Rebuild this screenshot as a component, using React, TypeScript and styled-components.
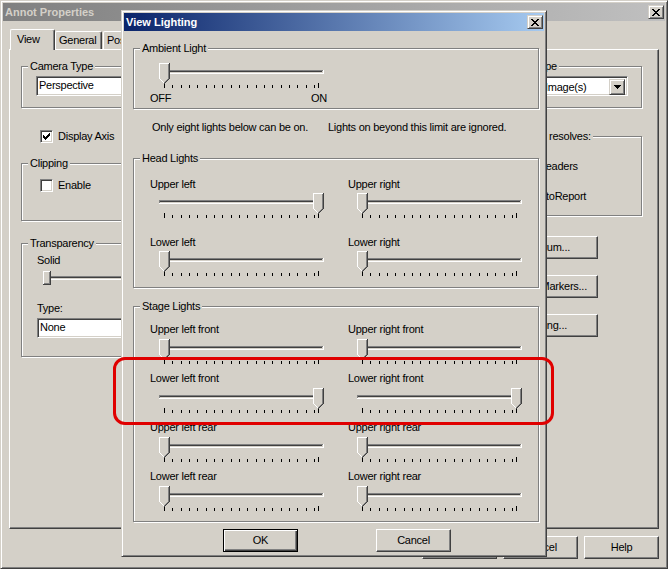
import React from 'react';
import styled, { createGlobalStyle, css } from 'styled-components';

const FACE = '#d4d0c8';
const SHADOW = '#808080';
const DARK = '#404040';

const GlobalStyle = createGlobalStyle`
  html, body { margin: 0; padding: 0; background: ${FACE}; }
  #root { width: 668px; height: 569px; }
`;

// win2000 bevels
const raised = css`
  border: 1px solid;
  border-color: #fff ${DARK} ${DARK} #fff;
  box-shadow: inset -1px -1px ${SHADOW};
`;

const frame = css`
  border: 1px solid;
  border-color: ${FACE} ${DARK} ${DARK} ${FACE};
  box-shadow: inset 1px 1px #fff, inset -1px -1px ${SHADOW};
`;

const sunken = css`
  border: 1px solid;
  border-color: ${SHADOW} #fff #fff ${SHADOW};
  box-shadow: inset 1px 1px ${DARK}, inset -1px -1px ${FACE};
`;

const Window = styled.div`
  position: relative;
  box-sizing: border-box;
  width: 668px;
  height: 569px;
  padding: 2px;
  background: ${FACE};
  ${frame};
  display: flex;
  flex-direction: column;
  overflow: hidden;
  font-family: "Liberation Sans", Arial, sans-serif;
  font-size: 11px;
  line-height: 13px;
  letter-spacing: -0.25px;
  color: #000;
`;

const TitleBar = styled.div<{ $active?: boolean }>`
  flex: 0 0 auto;
  height: 18px;
  display: flex;
  align-items: center;
  padding: 0 1px 0 2px;
  background: ${p => p.$active
    ? 'linear-gradient(to right, #0a246a, #a6caf0)'
    : 'linear-gradient(to right, #808080, #c0c0c0)'};
`;

const TitleText = styled.span<{ $active?: boolean }>`
  font-weight: bold;
  letter-spacing: 0;
  color: ${p => p.$active ? '#fff' : FACE};
  white-space: nowrap;
`;

const CaptionButton = styled.div`
  box-sizing: border-box;
  width: 16px;
  height: 14px;
  margin-left: auto;
  background: ${FACE};
  ${frame};
  display: flex;
  align-items: center;
  justify-content: center;
`;

const Glyph = styled.svg`
  display: block;
`;

const PixelIcon: React.FC<{ rows: string[] }> = ({ rows }) => (
  <Glyph width={rows[0].length} height={rows.length} shapeRendering="crispEdges">
    {rows.map((r, y) =>
      r.split('').map((c, x) =>
        c === 'X' ? <rect key={x + '-' + y} x={x} y={y} width={1} height={1} fill="#000" /> : null
      )
    )}
  </Glyph>
);

const CLOSE = ['XX....XX', '.XX..XX.', '..XXXX..', '...XX...', '..XXXX..', '.XX..XX.', 'XX....XX'];
const CHECK = ['......X', '.....XX', 'X...XXX', 'XX.XXX.', 'XXXXX..', '.XXX...', '..X....'];
const ARROW = ['XXXXXXX', '.XXXXX.', '..XXX..', '...X...'];

const WindowBody = styled.div`
  display: flex;
  flex-direction: column;
  padding: 8px 6px 0 6px;
`;

const TabStrip = styled.div`
  position: relative;
  z-index: 1;
  height: 20px;
  display: flex;
  align-items: flex-end;
`;

const Tab = styled.div<{ $selected?: boolean; $w: number; $ml: number }>`
  box-sizing: border-box;
  width: ${p => p.$w}px;
  height: ${p => (p.$selected ? 21 : 18)}px;
  margin: 0 0 ${p => (p.$selected ? -1 : 0)}px ${p => p.$ml}px;
  padding: ${p => (p.$selected ? '3px 0 0 6px' : '2px 0 0 3px')};
  background: ${FACE};
  border-top: 1px solid #fff;
  border-left: 1px solid #fff;
  border-right: 1px solid ${DARK};
  border-radius: 2px 2px 0 0;
  box-shadow: inset -1px 0 ${SHADOW};
  white-space: nowrap;
  overflow: hidden;
`;

const TabPanel = styled.div`
  box-sizing: border-box;
  height: 480px;
  border: 1px solid;
  border-color: #fff ${DARK} ${DARK} #fff;
  box-shadow: inset -1px -1px ${SHADOW};
  display: flex;
  justify-content: space-between;
  padding: 0 16px 0 11px;
`;

const Column = styled.div<{ $w: number }>`
  width: ${p => p.$w}px;
  display: flex;
  flex-direction: column;
`;

const Group = styled.div<{ $mt: number; $pb: number }>`
  display: flex;
  flex-direction: column;
  align-items: flex-start;
  margin-top: ${p => p.$mt}px;
  padding-bottom: ${p => p.$pb}px;
  border: 1px solid ${SHADOW};
  box-shadow: 1px 1px 0 #fff, inset 1px 1px 0 #fff;
`;

const GroupTitle = styled.div<{ $ml?: number }>`
  margin: -7px 0 0 ${p => p.$ml ?? 6}px;
  padding: 0 2px;
  background: ${FACE};
  white-space: nowrap;
`;

const TextField = styled.div<{ $mt: number; $ml: number }>`
  box-sizing: border-box;
  width: 200px;
  height: 20px;
  margin: ${p => p.$mt}px 0 0 ${p => p.$ml}px;
  padding-left: 2px;
  background: #fff;
  ${sunken};
  line-height: 16px;
  white-space: nowrap;
`;

const FieldLabel = styled.div<{ $mt: number }>`
  margin: ${p => p.$mt}px 0 0 15px;
`;

const CheckRow = styled.div<{ $mt: number; $indent: number }>`
  display: flex;
  align-items: center;
  gap: 5px;
  height: 13px;
  margin: ${p => p.$mt}px 0 0 ${p => p.$indent}px;
  white-space: nowrap;
`;

const CheckBox = styled.div`
  box-sizing: border-box;
  flex: 0 0 13px;
  height: 13px;
  padding: 2px 0 0 2px;
  background: #fff;
  ${sunken};
`;

const ComboBox = styled.div`
  box-sizing: border-box;
  width: 88px;
  height: 20px;
  margin: 3px 0 0 29px;
  background: #fff;
  ${sunken};
  padding: 2px;
  display: flex;
`;

const ComboText = styled.div`
  flex: 1;
  padding-left: 2px;
  line-height: 16px;
  white-space: nowrap;
`;

const ComboButton = styled.div`
  box-sizing: border-box;
  width: 16px;
  height: 16px;
  background: ${FACE};
  ${frame};
  display: flex;
  align-items: center;
  justify-content: center;
`;

const PushButton = styled.div<{ $default?: boolean; $w?: number; $padRight?: number }>`
  box-sizing: border-box;
  flex: 0 0 auto;
  width: ${p => p.$w ?? 75}px;
  height: 23px;
  display: flex;
  align-items: center;
  justify-content: ${p => (p.$padRight !== undefined ? 'flex-end' : 'center')};
  padding-right: ${p => p.$padRight ?? 0}px;
  background: ${FACE};
  white-space: nowrap;
  overflow: hidden;
  ${p => p.$default
    ? css`
        border: 1px solid #000;
        box-shadow: inset 1px 1px #fff, inset -1px -1px ${DARK}, inset -2px -2px ${SHADOW};
      `
    : raised};
`;

const SideButtons = styled.div`
  align-self: flex-end;
  margin: 20px 44px 0 0;
  display: flex;
  flex-direction: column;
  gap: 16px;
`;

const ButtonRow = styled.div`
  display: flex;
  justify-content: flex-end;
  gap: 6px;
  margin-top: 7px;
`;

// --- the View Lighting dialog, floating over the properties window ---

const Dialog = styled.div`
  position: absolute;
  z-index: 2;
  left: 120px;
  top: 9px;
  box-sizing: border-box;
  width: 426px;
  padding: 2px;
  background: ${FACE};
  ${frame};
  display: flex;
  flex-direction: column;
`;

const DialogGroup = styled(Group)`
  align-items: stretch;
  margin-left: 9px;
  margin-right: 5px;
  > :first-child {
    align-self: flex-start;
  }
`;

const SliderWrap = styled.div<{ $mt: number; $ml: number }>`
  margin: ${p => p.$mt}px 0 0 ${p => p.$ml}px;
  align-self: flex-start;
`;

const ScaleLabels = styled.div`
  width: 177px;
  margin: 4px 0 0 16px;
  display: flex;
  justify-content: space-between;
`;

const Note = styled.div`
  margin: 12px 0 0 28px;
  white-space: nowrap;
`;

const NoteGap = styled.span`
  margin-left: 20px;
`;

const LightGrid = styled.div<{ $mt: number; $rowGap: number }>`
  display: grid;
  grid-template-columns: 198px 1fr;
  row-gap: ${p => p.$rowGap}px;
  margin-top: ${p => p.$mt}px;
  padding-left: 16px;
`;

const Cell = styled.div`
  display: flex;
  flex-direction: column;
  align-items: flex-start;
`;

const CellLabel = styled.div`
  white-space: nowrap;
`;

const DialogButtons = styled.div`
  display: flex;
  gap: 78px;
  padding-left: 99px;
  margin: 7px 0 2px;
`;

const Annotation = styled.div`
  position: absolute;
  z-index: 3;
  left: 112px;
  top: 356px;
  box-sizing: border-box;
  width: 441px;
  height: 68px;
  border: 3px solid #e00000;
  border-radius: 12px;
  pointer-events: none;
`;

// trackbar with ticks, thumb pointing down
const TICKS = [...Array.from({ length: 19 }, (_, i) => Math.round(5 + i * 8.33)), 159];

const Thumb: React.FC<{ x: number }> = ({ x }) => {
  const px: React.ReactNode[] = [
    <rect key="b" x={x} y={0} width={11} height={16} fill={FACE} />,
    <rect key="wt" x={x} y={0} width={10} height={1} fill="#fff" />,
    <rect key="wl" x={x} y={0} width={1} height={16} fill="#fff" />,
    <rect key="dr" x={x + 10} y={0} width={1} height={16} fill={DARK} />,
    <rect key="gr" x={x + 9} y={1} width={1} height={15} fill={SHADOW} />,
  ];
  for (let k = 1; k <= 5; k++) {
    px.push(<rect key={'f' + k} x={x + k} y={15 + k} width={11 - 2 * k} height={1} fill={FACE} />);
    if (k < 5) {
      px.push(<rect key={'w' + k} x={x + k} y={15 + k} width={1} height={1} fill="#fff" />);
      px.push(<rect key={'g' + k} x={x + 9 - k} y={15 + k} width={1} height={1} fill={SHADOW} />);
    }
    px.push(<rect key={'d' + k} x={x + 10 - k} y={15 + k} width={1} height={1} fill={DARK} />);
  }
  return <>{px}</>;
};

const Slider: React.FC<{ max?: boolean }> = ({ max }) => (
  <Glyph width={165} height={25} shapeRendering="crispEdges">
    <rect x={0} y={7} width={164} height={1} fill={SHADOW} />
    <rect x={0} y={8} width={1} height={2} fill={SHADOW} />
    <rect x={1} y={8} width={162} height={1} fill={DARK} />
    <rect x={0} y={10} width={165} height={1} fill="#fff" />
    <rect x={164} y={7} width={1} height={4} fill="#fff" />
    {TICKS.map((t, i) => {
      const long = i === 0 || i === TICKS.length - 1;
      return <rect key={t} x={t} y={long ? 20 : 22} width={1} height={long ? 5 : 3} fill="#000" />;
    })}
    <Thumb x={max ? 154 : 0} />
  </Glyph>
);

const FlatSlider: React.FC = () => (
  <SliderWrap $mt={4} $ml={21}>
    <Glyph width={200} height={14} shapeRendering="crispEdges">
      <rect x={0} y={5} width={200} height={1} fill={SHADOW} />
      <rect x={0} y={6} width={200} height={1} fill={DARK} />
      <rect x={0} y={8} width={200} height={1} fill="#fff" />
      <rect x={0} y={0} width={8} height={14} fill={FACE} />
      <rect x={0} y={0} width={7} height={1} fill="#fff" />
      <rect x={0} y={0} width={1} height={13} fill="#fff" />
      <rect x={7} y={0} width={1} height={14} fill={DARK} />
      <rect x={0} y={13} width={8} height={1} fill={DARK} />
      <rect x={6} y={1} width={1} height={12} fill={SHADOW} />
      <rect x={1} y={12} width={6} height={1} fill={SHADOW} />
    </Glyph>
  </SliderWrap>
);

const Light: React.FC<{ label: string; max?: boolean; gap: number }> = ({ label, max, gap }) => (
  <Cell>
    <CellLabel>{label}</CellLabel>
    <SliderWrap $mt={gap} $ml={9}>
      <Slider max={max} />
    </SliderWrap>
  </Cell>
);

export default function App() {
  return (
    <>
      <GlobalStyle />
      <Window>
        <TitleBar>
          <TitleText>Annot Properties</TitleText>
          <CaptionButton>
            <PixelIcon rows={CLOSE} />
          </CaptionButton>
        </TitleBar>
        <WindowBody>
          <TabStrip>
            <Tab $selected $w={45} $ml={1}>View</Tab>
            <Tab $w={47} $ml={0}>General</Tab>
            <Tab $w={60} $ml={1}>Position</Tab>
          </TabStrip>
          <TabPanel>
            <Column $w={240}>
              <Group $mt={16} $pb={11}>
                <GroupTitle>Camera Type</GroupTitle>
                <TextField $mt={3} $ml={14}>Perspective</TextField>
              </Group>
              <CheckRow $mt={22} $indent={19}>
                <CheckBox><PixelIcon rows={CHECK} /></CheckBox>
                Display Axis
              </CheckRow>
              <Group $mt={20} $pb={28}>
                <GroupTitle>Clipping</GroupTitle>
                <CheckRow $mt={9} $indent={18}>
                  <CheckBox />
                  Enable
                </CheckRow>
              </Group>
              <Group $mt={22} $pb={18}>
                <GroupTitle>Transparency</GroupTitle>
                <FieldLabel $mt={4}>Solid</FieldLabel>
                <FlatSlider />
                <FieldLabel $mt={17}>Type:</FieldLabel>
                <TextField $mt={3} $ml={15}>None</TextField>
              </Group>
            </Column>
            <Column $w={132}>
              <Group $mt={16} $pb={11}>
                <GroupTitle $ml={14}>Scope</GroupTitle>
                <ComboBox>
                  <ComboText>Image(s)</ComboText>
                  <ComboButton>
                    <PixelIcon rows={ARROW} />
                  </ComboButton>
                </ComboBox>
              </Group>
              <Group $mt={28} $pb={12}>
                <GroupTitle $ml={14}>Link resolves:</GroupTitle>
                <CheckRow $mt={17} $indent={9}>
                  <CheckBox />
                  Headers
                </CheckRow>
                <CheckRow $mt={17} $indent={4}>
                  <CheckBox />
                  AutoReport
                </CheckRow>
              </Group>
              <SideButtons>
                <PushButton $w={80} $padRight={27}>Spectrum...</PushButton>
                <PushButton $w={80} $padRight={10}>Markers...</PushButton>
                <PushButton $w={80} $padRight={30}>Lighting...</PushButton>
              </SideButtons>
            </Column>
          </TabPanel>
          <ButtonRow>
            <PushButton>OK</PushButton>
            <PushButton>Cancel</PushButton>
            <PushButton>Help</PushButton>
          </ButtonRow>
        </WindowBody>

        <Dialog>
          <TitleBar $active>
            <TitleText $active>View Lighting</TitleText>
            <CaptionButton>
              <PixelIcon rows={CLOSE} />
            </CaptionButton>
          </TitleBar>
          <DialogGroup $mt={17} $pb={3}>
            <GroupTitle>Ambient Light</GroupTitle>
            <SliderWrap $mt={8} $ml={25}>
              <Slider />
            </SliderWrap>
            <ScaleLabels>
              <span>OFF</span>
              <span>ON</span>
            </ScaleLabels>
          </DialogGroup>
          <Note>
            Only eight lights below can be on.
            <NoteGap>Lights on beyond this limit are ignored.</NoteGap>
          </Note>
          <DialogGroup $mt={24} $pb={11}>
            <GroupTitle>Head Lights</GroupTitle>
            <LightGrid $mt={13} $rowGap={18}>
              <Light label="Upper left" max gap={2} />
              <Light label="Upper right" gap={2} />
              <Light label="Lower left" gap={2} />
              <Light label="Lower right" gap={2} />
            </LightGrid>
          </DialogGroup>
          <DialogGroup $mt={18} $pb={10}>
            <GroupTitle>Stage Lights</GroupTitle>
            <LightGrid $mt={10} $rowGap={8}>
              <Light label="Upper left front" gap={3} />
              <Light label="Upper right front" gap={3} />
              <Light label="Lower left front" max gap={3} />
              <Light label="Lower right front" max gap={3} />
              <Light label="Upper left rear" gap={3} />
              <Light label="Upper right rear" gap={3} />
              <Light label="Lower left rear" gap={3} />
              <Light label="Lower right rear" gap={3} />
            </LightGrid>
          </DialogGroup>
          <DialogButtons>
            <PushButton $default>OK</PushButton>
            <PushButton>Cancel</PushButton>
          </DialogButtons>
        </Dialog>

        <Annotation />
      </Window>
    </>
  );
}
